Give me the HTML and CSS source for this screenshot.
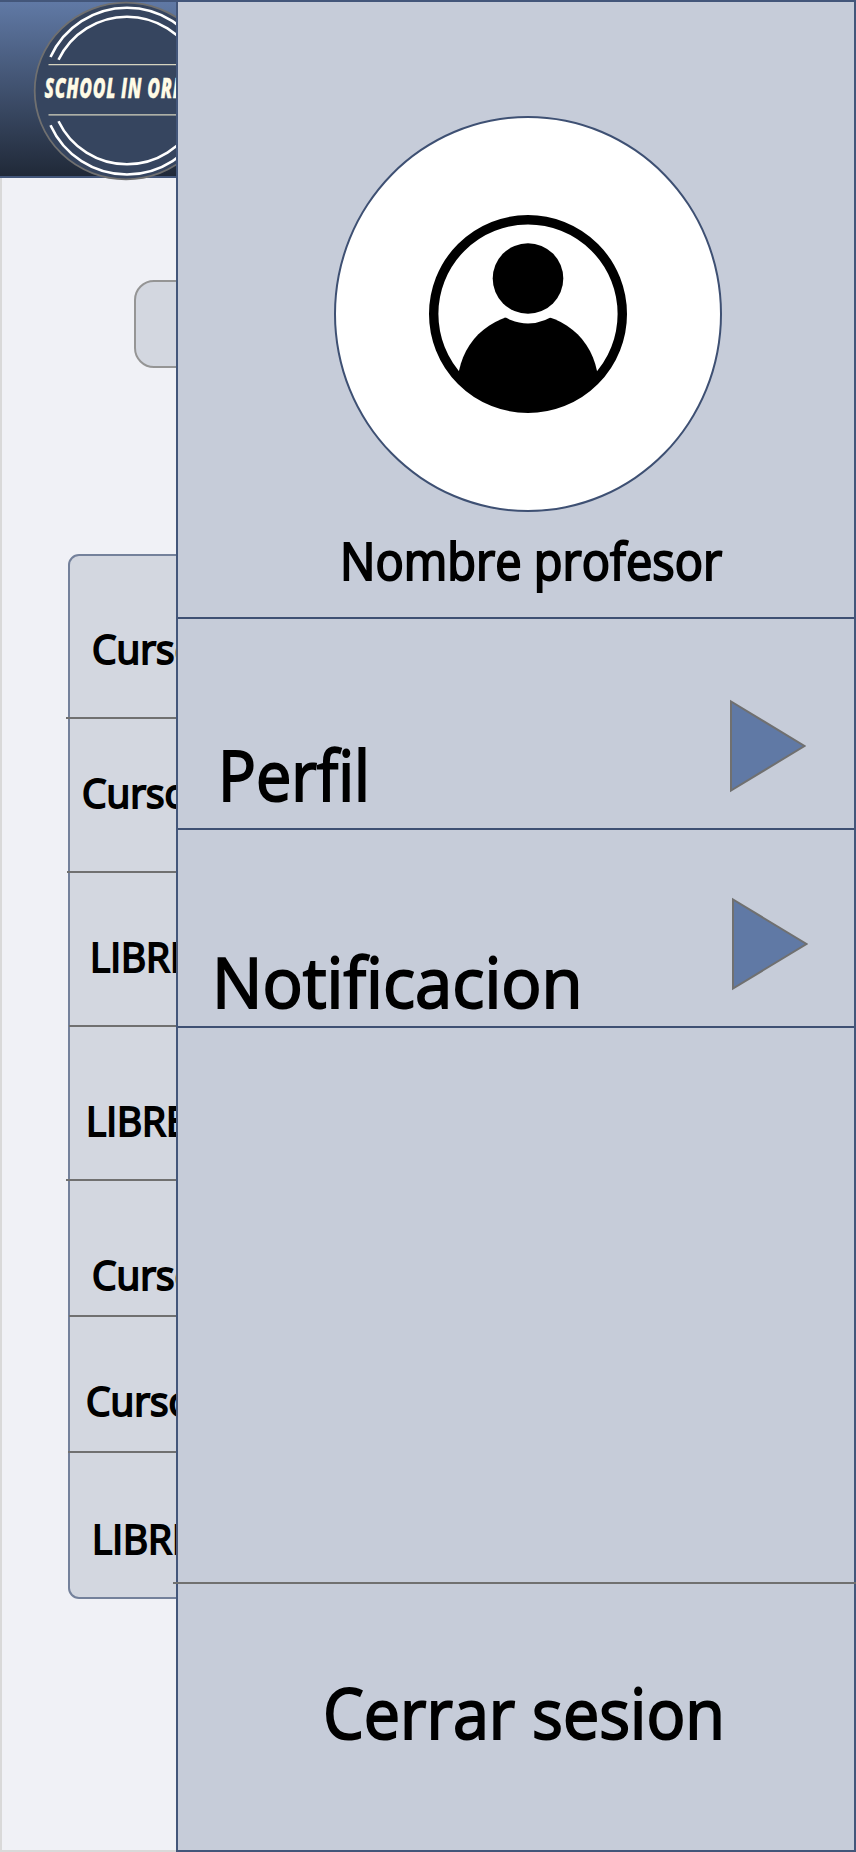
FILE: index.html
```html
<!DOCTYPE html>
<html lang="es">
<head>
<meta charset="utf-8">
<title>School in Order</title>
<link rel="stylesheet" href="styles.css">
</head>
<body>
<div class="screen">
  <header class="topbar">
    <svg class="logo" width="184" height="178" viewBox="34 2 184 178">
      <ellipse class="logo-disc" cx="126" cy="91" rx="91.3" ry="88.3"/>
      <g class="logo-arcs">
        <path d="M50.5 57A84 84 0 0 1 203.5 57"/>
        <path d="M58.5 59.8A76 76 0 0 1 195.5 59.8"/>
        <path d="M50.5 125.2A84 84 0 0 0 203.5 125.2"/>
        <path d="M58.5 121.2A76 76 0 0 0 195.5 121.2"/>
      </g>
      <path class="logo-rules" d="M48.5 64.7H205M48.5 114.8H205"/>
      <text class="logo-text" x="44.5" y="97.5" textLength="163" lengthAdjust="spacingAndGlyphs">SCHOOL IN ORDER</text>
    </svg>
  </header>
  <main class="content">
    <div class="search"></div>
    <ul class="courses">
      <li class="course course-1"><span>Curso</span></li>
      <li class="course course-2"><span>Curso</span></li>
      <li class="course course-3"><span>LIBRE</span></li>
      <li class="course course-4"><span>LIBRE</span></li>
      <li class="course course-5"><span>Curso</span></li>
      <li class="course course-6"><span>Curso</span></li>
      <li class="course course-7"><span>LIBRE</span></li>
    </ul>
  </main>
  <aside class="drawer">
    <section class="profile">
      <div class="avatar">
        <svg width="198" height="198" viewBox="0 0 198 198">
          <defs>
            <clipPath id="disc"><circle cx="99" cy="99" r="98"/></clipPath>
          </defs>
          <g clip-path="url(#disc)">
            <circle cx="99" cy="169" r="70.2"/>
            <rect x="28.8" y="169" width="140.4" height="30"/>
          </g>
          <circle class="avatar-gap" cx="99" cy="63.5" r="45"/>
          <circle cx="99" cy="63.5" r="35.3"/>
          <circle class="avatar-ring" cx="99" cy="99" r="94.3"/>
        </svg>
      </div>
      <div class="name">Nombre profesor</div>
    </section>
    <a class="item item-profile"><span class="label">Perfil</span>
      <svg class="arrow" width="77" height="94" viewBox="0 0 77 94"><path d="M2 2.5V91.5L75.5 47Z"/></svg>
    </a>
    <a class="item item-notice"><span class="label">Notificacion</span>
      <svg class="arrow" width="77" height="94" viewBox="0 0 77 94"><path d="M2 2.5V91.5L75.5 47Z"/></svg>
    </a>
    <a class="logout"><span class="label">Cerrar sesion</span></a>
  </aside>
</div>
</body>
</html>
```
FILE: styles.css
```css
* { box-sizing: border-box; }
body { margin: 0; font-family: "Open Sans", "Noto Sans", sans-serif; color: #000; }
svg { display: block; flex: none; }

.screen { position: relative; width: 856px; height: 1852px; overflow: hidden; background: #f0f1f6; display: flex; flex-direction: column; }

.topbar { flex: none; height: 178px; padding: 0 0 0 34px; border-top: 2px solid #43567a; border-bottom: 2px solid #43567a; background: linear-gradient(#6079a5, #202938); z-index: 1; }
.logo { overflow: visible; }
.logo-disc { fill: #36455f; stroke: #707070; stroke-width: 1.8; }
.logo-arcs { fill: none; stroke: #fff; stroke-width: 2.6; }
.logo-rules { fill: none; stroke: #d5d3bf; stroke-width: 1.3; }
.logo-text { fill: #fffbe6; stroke: #fffbe6; stroke-width: .3; font: italic 800 28px "Open Sans", sans-serif; letter-spacing: 1px; }

.content { flex: 1; padding: 102px 66px 0; border: solid #d9d9d9; border-width: 0 2px 2px; }
.search { height: 88px; margin: 0 66px; border: 2px solid #959595; border-radius: 20px; background: #d3d7e0; }
.courses { list-style: none; margin: 186px 0 0; padding: 0; height: 1045px; border: 2px solid #74819b; border-radius: 11px; background: #d3d7e0; }
.course { display: flex; align-items: flex-end; border-bottom: 2px solid #707070; font-size: 41px; line-height: 41px; -webkit-text-stroke: 2px #000; }
.course span { transform: scaleX(.945); transform-origin: left; }
.course-1 { height: 163px; margin-left: -4px; padding: 0 0 48px 26px; }
.course-2 { height: 154px; margin-left: -3px; padding: 0 0 58px 15px; }
.course-3 { height: 154px; margin-left: -1px; padding: 0 0 48px 21px; }
.course-4 { height: 154px; margin-left: -4px; padding: 0 0 38px 20px; }
.course-5 { height: 136px; margin-left: -1px; padding: 0 0 20px 23px; }
.course-6 { height: 136px; margin-left: -2px; padding: 0 0 30px 18px; }
.course-7 { height: 144px; padding: 0 0 38px 22px; border-bottom: 0; }

.drawer { position: absolute; inset: 0 0 0 176px; z-index: 2; display: flex; flex-direction: column; border: 2px solid #43567a; background: #c6ccd9; }
.profile { height: 617px; padding: 114px 0 0 156px; border-bottom: 2px solid #3e5073; }
.avatar { width: 388px; height: 396px; display: flex; align-items: center; justify-content: center; border: 2px solid #3e5073; border-radius: 50%; background: #fff; }
.avatar-gap { fill: #fff; }
.avatar-ring { fill: none; stroke: #000; stroke-width: 9.4; }
.name { margin: 23px 0 0 6px; font-size: 51px; line-height: 51px; white-space: nowrap; -webkit-text-stroke: 2px #000; transform: scaleX(.922); transform-origin: left; }
.item { display: flex; justify-content: space-between; align-items: flex-end; border-bottom: 2px solid #3e5073; }
.item-profile { height: 211px; padding: 0 48px 19px 40px; }
.item-notice { height: 198px; padding: 0 46px 10px 34px; }
.label { display: inline-block; font-size: 70px; line-height: 70px; white-space: nowrap; -webkit-text-stroke: 2px #000; font-variant-ligatures: none; transform-origin: left; }
.item-profile .label { transform: scaleX(.9); }
.item-notice .label { transform: scaleX(.957); }
.logout .label { transform: scaleX(.924); }
.arrow { align-self: flex-start; }
.item-profile .arrow { margin-top: 80px; }
.item-notice .arrow { margin-top: 67px; }
.arrow path { fill: #6079a5; stroke: #707070; stroke-width: 2; }
.logout { display: flex; align-items: flex-start; margin: auto -2px 0 -5px; height: 268px; padding: 93px 0 0 150px; border-top: 2px solid #707070; }
```
